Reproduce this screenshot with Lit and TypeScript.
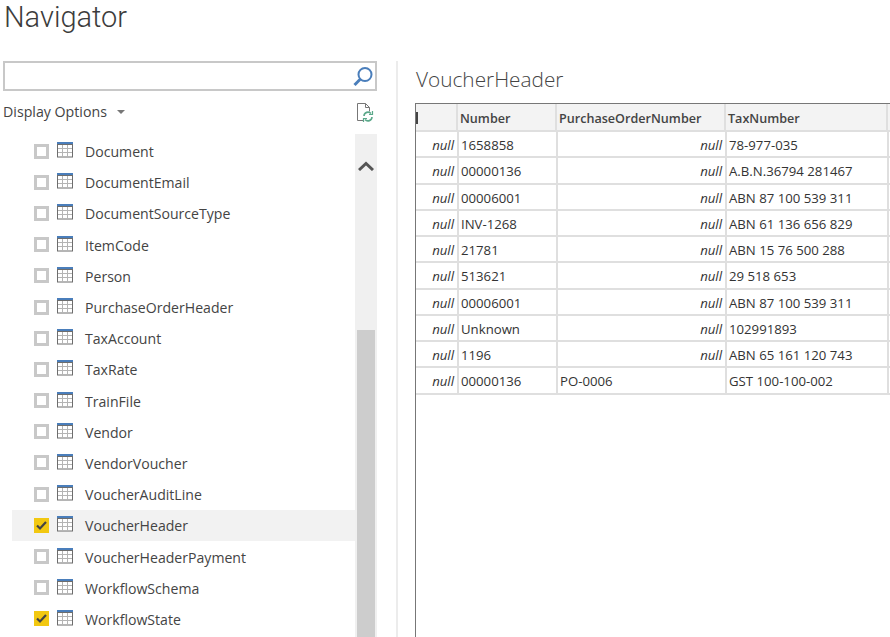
import { LitElement, html, css, svg } from 'lit';
import { customElement } from 'lit/decorators.js';

const tables = [
    'Document', 'DocumentEmail', 'DocumentSourceType', 'ItemCode', 'Person',
    'PurchaseOrderHeader', 'TaxAccount', 'TaxRate', 'TrainFile', 'Vendor',
    'VendorVoucher', 'VoucherAuditLine', 'VoucherHeader', 'VoucherHeaderPayment',
    'WorkflowSchema', 'WorkflowState',
];
const checked = ['VoucherHeader', 'WorkflowState'];

const rows: (string | null)[][] = [
    ['1658858', null, '78-977-035'],
    ['00000136', null, 'A.B.N.36794 281467'],
    ['00006001', null, 'ABN 87 100 539 311'],
    ['INV-1268', null, 'ABN 61 136 656 829'],
    ['21781', null, 'ABN 15 76 500 288'],
    ['513621', null, '29 518 653'],
    ['00006001', null, 'ABN 87 100 539 311'],
    ['Unknown', null, '102991893'],
    ['1196', null, 'ABN 65 161 120 743'],
    ['00000136', 'PO-0006', 'GST 100-100-002'],
];

const tableIcon = svg`
  <svg class="tbl" width="16" height="16" viewBox="0 0 16 16">
    <rect x="0" y="0" width="16" height="3" fill="#4a7ebb"/>
    <rect x="0.5" y="2.5" width="15" height="12.5" fill="#fff" stroke="#6d6d6d"/>
    <path d="M5.5 3v12M10.5 3v12M1 6.5h14M1 10.5h14" stroke="#b4b4b4" fill="none"/>
  </svg>`;

@customElement('app-root')
export class AppRoot extends LitElement {
    static styles = css`
    :host {
      display: block;
      width: 890px;
      height: 637px;
      overflow: hidden;
      background: #fff;
      color: #3c3c3c;
      font-family: "Open Sans", "Noto Sans", sans-serif;
    }
    .title {
      margin: 0;
      height: 61px;
      padding-left: 4px;
      font-family: Roboto, "Open Sans", sans-serif;
      font-size: 29px;
      font-weight: 300;
      line-height: normal;
      box-sizing: border-box;
    }
    .main { display: flex; height: 576px; }
    .left { width: 377px; padding-left: 3px; box-sizing: border-box; flex: none; }
    .search {
      height: 30px;
      width: 374px;
      box-sizing: border-box;
      border: 2px solid #c8c8c8;
      display: flex;
      align-items: center;
      justify-content: flex-end;
      padding-right: 2px;
    }
    .options {
      display: flex;
      align-items: center;
      height: 43px;
      padding: 0 2px 2px 0;
      font-size: 14.2px;
      color: #444;
      width: 374px;
      box-sizing: border-box;
    }
    .caret {
      width: 0;
      height: 0;
      margin-left: 10px;
      border-left: 4px solid transparent;
      border-right: 4px solid transparent;
      border-top: 4px solid #777;
    }
    .refresh { margin-left: auto; }
    .listwrap { display: flex; height: 503px; }
    .list { width: 352px; padding: 1.5px 0 0 9px; box-sizing: border-box; flex: none; }
    .row {
      height: 31.2px;
      display: flex;
      align-items: center;
      padding-left: 22px;
      font-size: 14.1px;
      color: #444;
    }
    .row.sel { background: #f2f2f2; }
    .check {
      width: 15px;
      height: 15px;
      box-sizing: border-box;
      border: 3px solid #c8c8c8;
      background: #fff;
      flex: none;
    }
    .check.on {
      border: none;
      background: #f2c811;
      display: flex;
      align-items: center;
      justify-content: center;
    }
    .tbl { margin-left: 8px; margin-top: -2px; flex: none; }
    .name { margin-left: 12px; padding-top: 1px; }
    .scroll {
      width: 22px;
      background: #f0f0f0;
      display: flex;
      flex-direction: column;
      align-items: center;
      flex: none;
    }
    .up { height: 196px; width: 100%; flex: none; padding-top: 20px; box-sizing: border-box; text-align: center; }
    .thumb { width: 18px; flex: 1; background: #cdcdcd; }
    .right {
      flex: 1;
      margin-left: 19px;
      border-left: 2px solid #ececec;
      padding-left: 17px;
      min-width: 0;
    }
    .subtitle {
      margin: 0;
      font-size: 20.8px;
      font-weight: 300;
      line-height: 28px;
      height: 42px;
      padding: 4px 0 0 1px;
      box-sizing: border-box;
      color: #444;
    }
    .preview {
      height: 534px;
      border-left: 1px solid #777;
      border-top: 1px solid #777;
      width: 476px;
      box-sizing: border-box;
    }
    .grid { display: grid; grid-template-columns: 43px 99px 169px 162px 3px; }
    .grid.top { grid-template-columns: 42px 99px 169px 162px 4px; }
    .cell {
      box-sizing: border-box;
      height: 26.25px;
      border-right: 2px solid #dfdfdf;
      border-bottom: 2px solid #dfdfdf;
      font-size: 13.2px;
      line-height: 26px;
      padding: 0 3px 0 2px;
      white-space: nowrap;
      overflow: hidden;
      color: #333;
    }
    .head {
      height: 28px;
      background: #f3f3f3;
      font-size: 12.6px;
      font-weight: 600;
      color: #444;
      line-height: 30px;
      padding-left: 2px;
    }
    .stub { display: flex; align-items: center; padding-left: 0; }
    .stub span { width: 2px; height: 12px; background: #444; margin-top: 2px; }
    .null { font-style: italic; text-align: right; }
    .last { border-right: none; }
    `;

    render() {
        return html`
      <h1 class="title">Navigator</h1>
      <div class="main">
        <div class="left">
          <div class="search">
            <svg width="22" height="22" viewBox="0 0 22 22">
              <circle cx="14" cy="9.5" r="6.5" fill="none" stroke="#4a7ebb" stroke-width="2"/>
              <path d="M9.2 14.3 3.5 20" stroke="#4a7ebb" stroke-width="3" fill="none"/>
            </svg>
          </div>
          <div class="options">
            Display Options<span class="caret"></span>
            <svg class="refresh" width="20" height="20" viewBox="0 0 20 20">
              <path d="M2.5 18.5V1.5h8l4 4v4M10.5 1.5v4h4M2.5 18.5h6" fill="none" stroke="#777"/>
              <path d="M9 14a4 4 0 0 1 7-2.5M17 15a4 4 0 0 1-7 2.5" fill="none" stroke="#5ba88a" stroke-width="1.6"/>
              <path d="M17.5 9v3.5H14M8.5 20v-3.5H12" fill="none" stroke="#5ba88a" stroke-width="1.2"/>
            </svg>
          </div>
          <div class="listwrap">
            <div class="list">
              ${tables.map((t) => {
                const on = checked.includes(t);
                return html`
                  <div class="row ${t === 'VoucherHeader' ? 'sel' : ''}">
                    <span class="check ${on ? 'on' : ''}">
                      ${on ? html`<svg width="11" height="11" viewBox="0 0 11 11"><path d="M1 5.5 4 8.5 10 2" fill="none" stroke="#444" stroke-width="2.2"/></svg>` : ''}
                    </span>
                    ${tableIcon}
                    <span class="name">${t}</span>
                  </div>`;
              })}
            </div>
            <div class="scroll">
              <div class="up">
                <svg width="16" height="10" viewBox="0 0 16 10"><path d="M1 9 8 2.5 15 9" fill="none" stroke="#555" stroke-width="3"/></svg>
              </div>
              <div class="thumb"></div>
            </div>
          </div>
        </div>
        <div class="right">
          <h2 class="subtitle">VoucherHeader</h2>
          <div class="preview">
            <div class="grid top">
              <div class="cell head stub"><span></span></div>
              <div class="cell head">Number</div>
              <div class="cell head">PurchaseOrderNumber</div>
              <div class="cell head">TaxNumber</div>
              <div class="cell head last"></div>
            </div>
            <div class="grid">
              ${rows.map((r) => html`
                <div class="cell null">null</div>
                ${r.map((v) => v === null
                    ? html`<div class="cell null">null</div>`
                    : html`<div class="cell">${v}</div>`)}
                <div class="cell last"></div>
              `)}
            </div>
          </div>
        </div>
      </div>
    `;
    }
}
